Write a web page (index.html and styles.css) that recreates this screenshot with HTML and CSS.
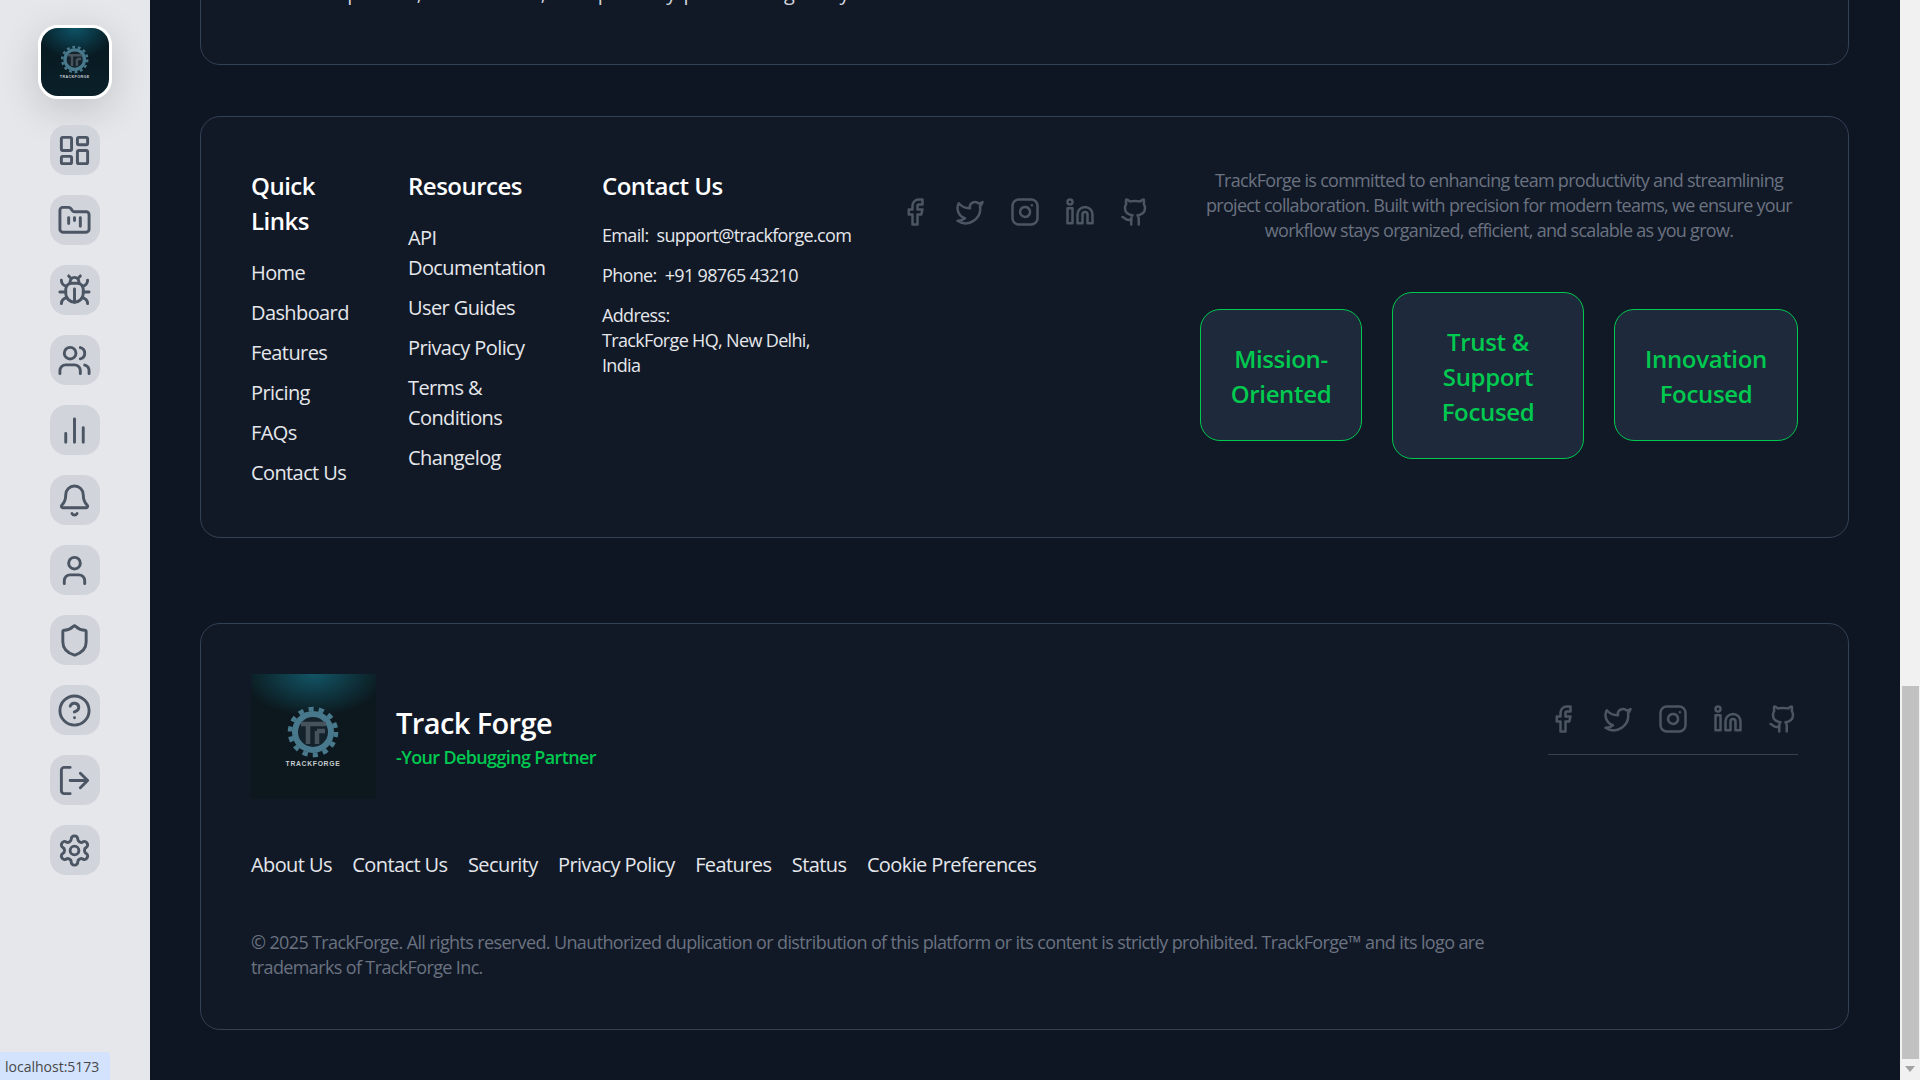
FILE: index.html
```html
<!DOCTYPE html>
<html lang="en">
<head>
    <meta charset="UTF-8">
    <meta name="viewport" content="width=device-width, initial-scale=1.0">
    <title>TrackForge</title>
    <link rel="stylesheet" href="styles.css">
</head>
<body>
    <svg class="defs" width="0" height="0">
        <symbol id="logo" viewBox="0 0 125 125">
            <circle cx="62" cy="58" r="23" fill="none" stroke="#48788c" stroke-width="4.5" stroke-dasharray="5.2 5.12"/>
            <circle cx="62" cy="58" r="18" fill="#14222b" stroke="#48788c" stroke-width="6"/>
            <path d="M50 50h25M57 50v20M66 57h8M66 57v13" fill="none" stroke="#46535c" stroke-width="4.5"/>
            <text x="62" y="92" text-anchor="middle" class="logo-text">TRACKFORGE</text>
        </symbol>
        <symbol id="i-dashboard" viewBox="0 0 24 24"><rect x="3" y="3" width="7" height="9" rx="1"/><rect x="14" y="3" width="7" height="5" rx="1"/><rect x="14" y="12" width="7" height="9" rx="1"/><rect x="3" y="16" width="7" height="5" rx="1"/></symbol>
        <symbol id="i-folder" viewBox="0 0 24 24"><path d="M4 20h16a2 2 0 0 0 2-2V8a2 2 0 0 0-2-2h-7.93a2 2 0 0 1-1.66-.9l-.82-1.2A2 2 0 0 0 7.93 3H4a2 2 0 0 0-2 2v13c0 1.1.9 2 2 2Z"/><path d="M8 10v4M12 10v2M16 10v6"/></symbol>
        <symbol id="i-bug" viewBox="0 0 24 24"><path d="m8 2 1.88 1.88M14.12 3.88 16 2M9 7.13v-1a3.003 3.003 0 1 1 6 0v1"/><path d="M12 20c-3.3 0-6-2.7-6-6v-3a4 4 0 0 1 4-4h4a4 4 0 0 1 4 4v3c0 3.3-2.7 6-6 6"/><path d="M12 20v-9M6.53 9C4.6 8.8 3 7.1 3 5M6 13H2M3 21c0-2.1 1.7-3.9 3.8-4M20.97 5c0 2.1-1.6 3.8-3.5 4M22 13h-4M17.2 17c2.1.1 3.8 1.9 3.8 4"/></symbol>
        <symbol id="i-users" viewBox="0 0 24 24"><path d="M16 21v-2a4 4 0 0 0-4-4H6a4 4 0 0 0-4 4v2"/><circle cx="9" cy="7" r="4"/><path d="M22 21v-2a4 4 0 0 0-3-3.87M16 3.13a4 4 0 0 1 0 7.75"/></symbol>
        <symbol id="i-chart" viewBox="0 0 24 24"><path d="M18 20V10M12 20V4M6 20v-6"/></symbol>
        <symbol id="i-bell" viewBox="0 0 24 24"><path d="M10.268 21a2 2 0 0 0 3.464 0"/><path d="M3.262 15.326A1 1 0 0 0 4 17h16a1 1 0 0 0 .74-1.673C19.41 13.956 18 12.499 18 8A6 6 0 0 0 6 8c0 4.499-1.411 5.956-2.738 7.326"/></symbol>
        <symbol id="i-user" viewBox="0 0 24 24"><path d="M19 21v-2a4 4 0 0 0-4-4H9a4 4 0 0 0-4 4v2"/><circle cx="12" cy="7" r="4"/></symbol>
        <symbol id="i-shield" viewBox="0 0 24 24"><path d="M20 13c0 5-3.5 7.5-7.66 8.95a1 1 0 0 1-.67-.01C7.5 20.5 4 18 4 13V6a1 1 0 0 1 1-1c2 0 4.5-1.2 6.24-2.72a1.17 1.17 0 0 1 1.52 0C14.51 3.81 17 5 19 5a1 1 0 0 1 1 1z"/></symbol>
        <symbol id="i-help" viewBox="0 0 24 24"><circle cx="12" cy="12" r="10"/><path d="M9.09 9a3 3 0 0 1 5.83 1c0 2-3 3-3 3M12 17h.01"/></symbol>
        <symbol id="i-logout" viewBox="0 0 24 24"><path d="M9 21H5a2 2 0 0 1-2-2V5a2 2 0 0 1 2-2h4"/><path d="m16 17 5-5-5-5M21 12H9"/></symbol>
        <symbol id="i-settings" viewBox="0 0 24 24"><path d="M12.22 2h-.44a2 2 0 0 0-2 2v.18a2 2 0 0 1-1 1.73l-.43.25a2 2 0 0 1-2 0l-.15-.08a2 2 0 0 0-2.73.73l-.22.38a2 2 0 0 0 .73 2.73l.15.1a2 2 0 0 1 1 1.72v.51a2 2 0 0 1-1 1.74l-.15.09a2 2 0 0 0-.73 2.73l.22.38a2 2 0 0 0 2.73.73l.15-.08a2 2 0 0 1 2 0l.43.25a2 2 0 0 1 1 1.73V20a2 2 0 0 0 2 2h.44a2 2 0 0 0 2-2v-.18a2 2 0 0 1 1-1.73l.43-.25a2 2 0 0 1 2 0l.15.08a2 2 0 0 0 2.73-.73l.22-.39a2 2 0 0 0-.73-2.73l-.15-.08a2 2 0 0 1-1-1.74v-.5a2 2 0 0 1 1-1.74l.15-.09a2 2 0 0 0 .73-2.73l-.22-.38a2 2 0 0 0-2.73-.73l-.15.08a2 2 0 0 1-2 0l-.43-.25a2 2 0 0 1-1-1.73V4a2 2 0 0 0-2-2z"/><circle cx="12" cy="12" r="3"/></symbol>
        <symbol id="i-facebook" viewBox="0 0 24 24"><path d="M18 2h-3a5 5 0 0 0-5 5v3H7v4h3v8h4v-8h3l1-4h-4V7a1 1 0 0 1 1-1h3z"/></symbol>
        <symbol id="i-twitter" viewBox="0 0 24 24"><path d="M22 4s-.7 2.1-2 3.4c1.6 10-9.4 17.3-18 11.6 2.2.1 4.4-.6 6-2C3 15.5.5 9.6 3 5c2.2 2.6 5.6 4.1 9 4-.9-4.2 4-6.6 7-3.8 1.1 0 3-1.2 3-1.2z"/></symbol>
        <symbol id="i-instagram" viewBox="0 0 24 24"><rect x="2" y="2" width="20" height="20" rx="5"/><path d="M16 11.37A4 4 0 1 1 12.63 8 4 4 0 0 1 16 11.37zM17.5 6.5h.01"/></symbol>
        <symbol id="i-linkedin" viewBox="0 0 24 24"><path d="M16 8a6 6 0 0 1 6 6v7h-4v-7a2 2 0 0 0-2-2 2 2 0 0 0-2 2v7h-4v-7a6 6 0 0 1 6-6z"/><rect x="2" y="9" width="4" height="12"/><circle cx="4" cy="4" r="2"/></symbol>
        <symbol id="i-github" viewBox="0 0 24 24"><path d="M15 22v-4a4.8 4.8 0 0 0-1-3.5c3 0 6-2 6-5.5.08-1.25-.27-2.48-1-3.5.28-1.15.28-2.35 0-3.5 0 0-1 0-3 1.5-2.64-.5-5.36-.5-8 0C6 2 5 2 5 2c-.3 1.15-.3 2.35 0 3.5A5.403 5.403 0 0 0 4 9c0 3.5 3 5.5 6 5.5-.39.49-.68 1.05-.85 1.65-.17.6-.22 1.23-.15 1.85v4"/><path d="M9 18c-4.51 2-5-2-7-2"/></symbol>
    </svg>

    <!-- Sidebar -->
    <aside class="sidebar">
        <a class="side-logo"><svg><use href="#logo"/></svg></a>
        <a class="side-btn"><svg><use href="#i-dashboard"/></svg></a>
        <a class="side-btn"><svg><use href="#i-folder"/></svg></a>
        <a class="side-btn"><svg><use href="#i-bug"/></svg></a>
        <a class="side-btn"><svg><use href="#i-users"/></svg></a>
        <a class="side-btn"><svg><use href="#i-chart"/></svg></a>
        <a class="side-btn"><svg><use href="#i-bell"/></svg></a>
        <a class="side-btn"><svg><use href="#i-user"/></svg></a>
        <a class="side-btn"><svg><use href="#i-shield"/></svg></a>
        <a class="side-btn"><svg><use href="#i-help"/></svg></a>
        <a class="side-btn"><svg><use href="#i-logout"/></svg></a>
        <a class="side-btn"><svg><use href="#i-settings"/></svg></a>
    </aside>

    <main class="content">
        <!-- Card scrolled mostly out of view -->
        <section class="card card-scrolled">
            <p>updates, milestones, and publicly prioritizing daily</p>
        </section>

        <section class="card card-links">
            <div class="link-col">
                <h3>Quick Links</h3>
                <ul>
                    <li>Home</li>
                    <li>Dashboard</li>
                    <li>Features</li>
                    <li>Pricing</li>
                    <li>FAQs</li>
                    <li>Contact Us</li>
                </ul>
            </div>
            <div class="link-col">
                <h3>Resources</h3>
                <ul>
                    <li>API Documentation</li>
                    <li>User Guides</li>
                    <li>Privacy Policy</li>
                    <li>Terms &amp; Conditions</li>
                    <li>Changelog</li>
                </ul>
            </div>
            <div class="contact-col">
                <h3>Contact Us</h3>
                <p><span class="label">Email:</span> support@trackforge.com</p>
                <p><span class="label">Phone:</span> +91 98765 43210</p>
                <p><span class="label">Address:</span><br>TrackForge HQ, New Delhi,<br>India</p>
            </div>
            <div class="socials socials-top">
                <svg><use href="#i-facebook"/></svg>
                <svg><use href="#i-twitter"/></svg>
                <svg><use href="#i-instagram"/></svg>
                <svg><use href="#i-linkedin"/></svg>
                <svg><use href="#i-github"/></svg>
            </div>
            <div class="about-col">
                <p>TrackForge is committed to enhancing team productivity and streamlining project collaboration. Built with precision for modern teams, we ensure your workflow stays organized, efficient, and scalable as you grow.</p>
                <div class="values">
                    <div class="value value-mission">Mission-Oriented</div>
                    <div class="value value-trust">Trust &amp; Support Focused</div>
                    <div class="value value-innovation">Innovation Focused</div>
                </div>
            </div>
        </section>

        <footer class="card card-footer">
            <div class="footer-top">
                <div class="brand">
                    <svg class="brand-logo"><use href="#logo"/></svg>
                    <div>
                        <h2>Track Forge</h2>
                        <p>-Your Debugging Partner</p>
                    </div>
                </div>
                <div class="socials socials-footer">
                    <svg><use href="#i-facebook"/></svg>
                    <svg><use href="#i-twitter"/></svg>
                    <svg><use href="#i-instagram"/></svg>
                    <svg><use href="#i-linkedin"/></svg>
                    <svg><use href="#i-github"/></svg>
                </div>
            </div>
            <nav class="footer-nav">
                <a>About Us</a>
                <a>Contact Us</a>
                <a>Security</a>
                <a>Privacy Policy</a>
                <a>Features</a>
                <a>Status</a>
                <a>Cookie Preferences</a>
            </nav>
            <p class="copyright">© 2025 TrackForge. All rights reserved. Unauthorized duplication or distribution of this platform or its content is strictly prohibited. TrackForge™ and its logo are trademarks of TrackForge Inc.</p>
        </footer>
    </main>

    <!-- Browser chrome -->
    <div class="scrollbar">
        <div class="scroll-thumb"></div>
        <div class="scroll-arrow"></div>
    </div>
    <div class="status-bubble">localhost:5173</div>
</body>
</html>
```

FILE: styles.css
```css
/* Color Theme */
:root {
    --page-bg: #0e1624;
    --card-bg: #111927;
    --card-border: #334155;
    --green: #00c950;
    --muted: #6b7280;
    --icon: #4b5563;
    --link: #e5e7eb;
}

/* General Styles */
* {
    box-sizing: border-box;
}
html, body {
    height: 100%;
}
body {
    display: flex;
    margin: 0;
    overflow: hidden;
    background-color: var(--page-bg);
    color: var(--link);
    font-family: "Open Sans", "Noto Sans", Arial, sans-serif;
    letter-spacing: -0.6px;
}
h2, h3, p, ul {
    margin: 0;
    padding: 0;
}
ul {
    list-style: none;
}
.defs {
    position: absolute;
}
.logo-text {
    fill: #c6ccd0;
    font-family: "Liberation Sans", Arial, sans-serif;
    font-size: 6.8px;
    font-weight: 700;
    letter-spacing: 0.1em;
}

/* Sidebar */
.sidebar {
    flex: 0 0 150px;
    display: flex;
    flex-direction: column;
    align-items: center;
    gap: 20px;
    padding-top: 25px;
    background-color: #e5e7eb;
}
.side-logo {
    width: 74px;
    height: 74px;
    margin-bottom: 6px;
    border: 3px solid #fff;
    border-radius: 20px;
    background: radial-gradient(ellipse 60% 45% at 50% 0, #0e5468, transparent), linear-gradient(#07171e, #0a2029);
    box-shadow: 0 10px 40px rgba(0, 0, 0, 0.16);
    overflow: hidden;
}
.side-logo svg {
    display: block;
    width: 68px;
    height: 68px;
}
.side-btn {
    display: flex;
    justify-content: center;
    align-items: center;
    width: 50px;
    height: 50px;
    border-radius: 16px;
    background-color: #d1d5db;
}
.side-btn svg {
    width: 35px;
    height: 35px;
    margin-right: 1px;
    fill: none;
    stroke: var(--icon);
    stroke-width: 2;
    stroke-linecap: round;
    stroke-linejoin: round;
}

/* Cards */
.content {
    flex: 1;
    min-width: 0;
    padding: 0 51px 0 50px;
}
.card {
    border: 1px solid var(--card-border);
    border-radius: 20px;
    background-color: var(--card-bg);
    padding: 50px;
}
.card-scrolled {
    height: 120px;
    margin-top: -55px;
    padding: 32px 0 0 133px;
    color: #d1d5db;
    font-size: 20px;
    line-height: 30px;
    letter-spacing: 1px;
}
.card-links {
    display: flex;
    margin-top: 51px;
    padding-top: 51px;
    height: 422px;
}
.link-col h3, .contact-col h3 {
    margin-bottom: 20px;
    color: #fff;
    font-size: 24px;
    font-weight: 600;
    line-height: 35px;
    letter-spacing: -0.5px;
}
.link-col:first-child {
    flex: 0 0 157px;
    padding-right: 50px;
}
.link-col:nth-child(2) {
    flex: 0 0 194px;
    padding-right: 50px;
}
.link-col li {
    margin-bottom: 10px;
    font-size: 20px;
    line-height: 30px;
}
.contact-col {
    flex: 0 0 298px;
    padding-right: 40px;
    font-size: 18px;
    line-height: 25px;
    letter-spacing: -0.66px;
}
.contact-col p {
    margin-bottom: 15px;
}
.label {
    margin-right: 4px;
}

/* Social icons */
.socials {
    display: flex;
    gap: 25px;
}
.socials svg {
    width: 30px;
    height: 30px;
    fill: none;
    stroke: var(--icon);
    stroke-width: 2;
    stroke-linecap: round;
    stroke-linejoin: round;
}
.socials-top {
    flex: 0 0 300px;
    align-self: flex-start;
    margin-top: 29px;
}
.socials-footer {
    margin-top: 30px;
    padding-bottom: 20px;
    border-bottom: 1px solid var(--card-border);
    align-self: flex-start;
}

/* About and values */
.about-col {
    flex: 1;
    text-align: center;
}
.about-col > p {
    margin-bottom: 49px;
    color: var(--muted);
    font-size: 18px;
    line-height: 25px;
    letter-spacing: -0.71px;
}
.values {
    display: flex;
    align-items: center;
    gap: 30px;
    letter-spacing: -0.35px;
}
.value {
    padding: 31px 30px 29px;
    border: 1.5px solid var(--green);
    border-radius: 20px;
    background-color: #1e293b;
    color: var(--green);
    font-size: 24px;
    font-weight: 600;
    line-height: 35px;
}
.value-mission {
    flex: 0 0 162px;
    margin-bottom: 2px;
    padding: 31px 10px 29px;
}
.value-trust {
    flex: 0 0 192px;
}
.value-innovation {
    flex: 0 0 184px;
    margin-bottom: 2px;
    padding: 31px 10px 29px;
}

/* Footer */
.card-footer {
    margin-top: 85px;
    height: 407px;
}
.footer-top {
    display: flex;
    justify-content: space-between;
}
.brand {
    display: flex;
    align-items: center;
    gap: 20px;
}
.brand-logo {
    width: 125px;
    height: 125px;
    background: radial-gradient(ellipse 58% 34% at 50% 0, #125566, transparent), #0c181d;
}
.brand h2 {
    color: #fff;
    font-size: 29px;
    font-weight: 600;
    line-height: 40px;
}
.brand p {
    color: var(--green);
    font-size: 18px;
    font-weight: 600;
    line-height: 28px;
    letter-spacing: -0.64px;
}
.footer-nav {
    display: flex;
    gap: 20.5px;
    margin-top: 51px;
    font-size: 20px;
    line-height: 30px;
}
.copyright {
    width: 1250px;
    margin-top: 50px;
    color: var(--muted);
    font-size: 18px;
    line-height: 25px;
    letter-spacing: -0.63px;
}

/* Browser chrome */
.scrollbar {
    flex: 0 0 20px;
    display: flex;
    flex-direction: column;
    justify-content: flex-end;
    align-items: center;
    background-color: #f1f1f1;
}
.scroll-thumb {
    width: 17px;
    height: 373px;
    background-color: #c1c1c1;
}
.scroll-arrow {
    width: 0;
    height: 0;
    margin: 7px 0 8px;
    border-top: 6px solid #a3a3a3;
    border-left: 5px solid transparent;
    border-right: 5px solid transparent;
}
.status-bubble {
    position: fixed;
    left: 0;
    bottom: 0;
    height: 28px;
    width: 110px;
    padding-left: 5px;
    border-top-right-radius: 4px;
    background-color: #d3e3fd;
    color: #474747;
    font-size: 14px;
    line-height: 30px;
    letter-spacing: 0;
}
```
